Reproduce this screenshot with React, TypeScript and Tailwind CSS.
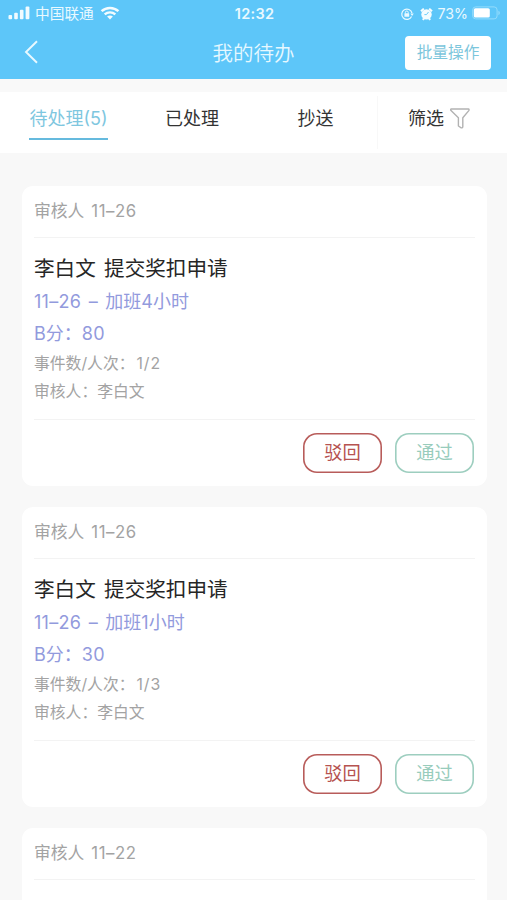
import type { ReactNode } from 'react'

interface Todo {
  id: number
  date: string
  applicant?: string
  reason?: string
  score?: number
  count?: string
}

const todos: Todo[] = [
  { id: 1, date: '11–26', applicant: '李白文', reason: '加班4小时', score: 80, count: '1/2' },
  { id: 2, date: '11–26', applicant: '李白文', reason: '加班1小时', score: 30, count: '1/3' },
  { id: 3, date: '11–22' },
]

const StatusBar = () => (
  <div className="flex h-[27px] items-center pt-px text-[#e9f9ff]">
    <div className="flex flex-1 items-center pl-2">
      <svg className="-mt-px" width="23" height="14" viewBox="0 0 23 14" fill="#f1fbff">
        <rect x="0.5" y="9" width="3.6" height="4.2" rx="1" />
        <rect x="6.2" y="6.8" width="3.6" height="6.4" rx="1" />
        <rect x="11.9" y="3.8" width="3.6" height="9.4" rx="1" />
        <rect x="17.6" y="0.4" width="3.8" height="12.8" rx="1" />
      </svg>
      <span className="ml-1 text-[14.7px] leading-none">中国联通</span>
      <svg className="-mt-0.5 ml-1.5" width="20" height="14" viewBox="0 0 20 14" fill="none" stroke="#f4fcff">
        <path d="M1.6 5.2C6.3 0.9 13.7 0.9 18.4 5.2" strokeWidth="2.5" />
        <path d="M4.7 8.4C7.7 5.7 12.3 5.7 15.3 8.4" strokeWidth="2.4" />
        <path d="M10 13.4 7.1 10.6C8.8 9.1 11.2 9.1 12.9 10.6Z" fill="#f4fcff" stroke="none" />
      </svg>
    </div>
    <span className="text-[14.5px] leading-none font-semibold tracking-[0.3px]">12:32</span>
    <div className="flex flex-1 items-center justify-end pr-[6px]">
      {/* Rotation lock */}
      <svg width="14" height="14" viewBox="0 0 14 14" fill="none" stroke="#e9f9ff" strokeWidth="1.2">
        <path d="M11.6 9.6A5.2 5.2 0 1 1 12 6" />
        <path d="M10.3 6.4H13.8L12.1 9Z" fill="#e9f9ff" stroke="none" />
        <rect x="4.4" y="6.3" width="4.8" height="3.5" rx="0.5" fill="#e9f9ff" stroke="none" />
        <path d="M5.4 6.5V5.4a1.4 1.4 0 0 1 2.8 0V6.5" strokeWidth="1" />
      </svg>
      {/* Alarm */}
      <svg className="ml-[6px]" width="13" height="14" viewBox="0 0 13 14">
        <circle cx="6.5" cy="7.4" r="5.2" fill="#f4fcff" />
        <path d="M1 4.3 3.8 1.6M12 4.3 9.2 1.6M2.8 12.8 4 11.3M10.2 12.8 9 11.3" stroke="#f4fcff" strokeWidth="2" />
        <path d="M8.5 5 6.5 7.6H4.4" stroke="#5dc6f9" strokeWidth="0.9" fill="none" />
      </svg>
      <span className="ml-[5px] text-[14.2px] leading-none">73%</span>
      <svg className="-mt-px ml-1" width="29" height="14" viewBox="0 0 29 14">
        <rect x="0.7" y="0.9" width="24.4" height="12" rx="3" fill="none" stroke="#94dcfc" />
        <rect x="1.8" y="2.2" width="16" height="9.4" rx="1.6" fill="#fff" />
        <path d="M26.4 4.8v4.4a2.4 2.4 0 0 0 0-4.4Z" fill="#94dcfc" />
      </svg>
    </div>
  </div>
)

const NavBar = () => (
  <div className="grid h-[52px] grid-cols-3 items-center">
    <svg className="-mt-0.5 ml-[24px]" width="14" height="24" viewBox="0 0 14 24" fill="none" stroke="#e9f9ff" strokeWidth="1.9">
      <path d="M13 1.2 2 12 13 22.8" />
    </svg>
    <h1 className="pt-0.5 text-center text-[20.5px] leading-none font-[350] text-[#e6f8ff]">我的待办</h1>
    <button className="mr-[16px] h-[34px] w-[86px] justify-self-end rounded-[4px] bg-white text-[15.7px] leading-none text-[#7cc6dc]">
      批量操作
    </button>
  </div>
)

const Tabs = () => (
  <div className="flex h-[61px] bg-white text-[18px] leading-none text-[#333]">
    <div className="flex w-[137px] justify-center">
      <div className="mt-[9px] flex h-[39px] items-center border-b-2 border-[#65bade] pb-px whitespace-nowrap text-[#7fc7df]">
        待处理(5)
      </div>
    </div>
    <div className="flex w-[110px] items-center justify-center pb-[7px]">已处理</div>
    <div className="flex w-[130px] items-center justify-center pl-[7px] pb-[7px]">抄送</div>
    <div className="my-1 flex flex-1 items-center border-l border-[#f8f8f8] pb-[7px] pl-[30px]">
      筛选
      <svg className="mb-0.5 ml-[6px]" width="20" height="21" viewBox="0 0 20 21" fill="none" stroke="#b2b2b2" strokeWidth="1.4" strokeLinejoin="round">
        <path d="M1.4 1H18.4Q19.4 1.2 18.8 2.6L12.8 9.8V18.6Q12.6 20.2 11.2 19.8L8.4 18V9.8L1 2.6Q0.2 1.2 1.4 1Z" />
      </svg>
    </div>
  </div>
)

const ActionButton = ({ className, children }: { className: string; children: ReactNode }) => (
  <button className={`h-10 w-[79px] rounded-[14px] pb-px text-[18.3px] leading-none ${className}`}>
    {children}
  </button>
)

const TodoCard = ({ todo }: { todo: Todo }) => (
  <div className="h-[300px] shrink-0 rounded-[11px] bg-white px-3">
    <div className="flex h-[52px] items-center border-b border-[#f3f3f3] pt-px text-[16.8px] text-[#a3a3a3]">
      审核人<span className="ml-[7px] tracking-[0.5px]">{todo.date}</span>
    </div>
    {todo.applicant && (
      <>
        <div className="h-[182px] border-b border-[#f3f3f3] pt-[14px]">
          <h2 className="text-[20.6px] leading-[33px] text-[#262626] [word-spacing:2.5px]">
            {todo.applicant} 提交奖扣申请
          </h2>
          <p className="mt-px text-[18px] leading-8 text-[#929add] [word-spacing:2px]">
            <span className="tracking-[0.3px]">{todo.date} – </span>
            {todo.reason}
          </p>
          <p className="text-[18px] leading-[31px] text-[#929add]">
            B分：<span className="tracking-[0.3px]">{todo.score}</span>
          </p>
          <p className="mt-px text-[15.8px] leading-7 text-[#a3a3a3]">
            事件数/人次：<span className="ml-0.5 tracking-[0.9px]">{todo.count}</span>
          </p>
          <p className="text-[15.8px] leading-7 text-[#a3a3a3]">审核人：{todo.applicant}</p>
        </div>
        <div className="flex justify-end gap-[13px] pt-[13px] pr-px">
          <ActionButton className="text-[#b65350] shadow-[inset_0_0_0_1.6px_#b85c5a]">驳回</ActionButton>
          <ActionButton className="text-[#98ccbc] shadow-[inset_0_0_0_1.6px_#9dcebf]">通过</ActionButton>
        </div>
      </>
    )}
  </div>
)

export default function App() {
  return (
    <div className="h-[900px] w-[507px] overflow-hidden bg-[#f8f8f8] font-['Inter','Noto_Sans_CJK_SC',sans-serif]">
      <header className="h-[79px] bg-[#5dc6f9]">
        <StatusBar />
        <NavBar />
      </header>
      <div className="h-[13px] bg-[#f9f9f9]" />
      <Tabs />
      <main className="flex flex-col gap-[21px] pt-[33px] pr-5 pl-[22px]">
        {todos.map((todo) => (
          <TodoCard key={todo.id} todo={todo} />
        ))}
      </main>
    </div>
  )
}
